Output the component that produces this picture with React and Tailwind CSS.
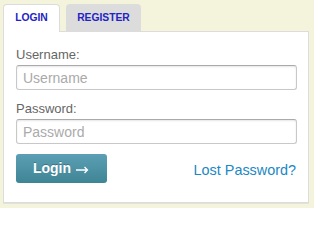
import React from 'react';

const font = { fontFamily: '"Liberation Sans", Arial, sans-serif' };

export default function App() {
    return (
        <div className="w-[314px] h-[208px] bg-[#f4f4dc] pt-[4px] pl-[3px] pr-[5px]" style={font}>
            {/* Onglets */}
            <div className="flex gap-[6px] items-end">
                <div className="relative z-10 -mb-px w-[57px] h-[28px] bg-white border border-b-0 border-[#dcdcdc] rounded-t-[4px] flex items-center justify-center pb-px">
                    <span className="text-[10.3px] font-bold text-[#2323c4]">LOGIN</span>
                </div>
                <div className="w-[75px] h-[27px] bg-[#dcdcdc] rounded-t-[4px] flex items-center justify-center">
                    <span className="text-[10.3px] font-bold text-[#2323c4]">REGISTER</span>
                </div>
            </div>

            {/* Formulaire */}
            <div className="h-[172px] bg-white border border-[#dcdcdc] shadow-[0_1px_0_#e2e2d8] px-[12px] pt-[14px]">
                <label className="block text-[13px] leading-[17px] text-[#666] mb-[2px]">Username:</label>
                <input
                    className="block w-[281px] h-[25px] px-[6px] text-[14px] text-[#555] placeholder:text-[#aaa] border border-[#c8c8c8] border-t-[#aaa] rounded-[3px] shadow-[inset_0_1px_2px_rgba(0,0,0,0.1)] outline-none"
                    placeholder="Username"
                    style={font}
                />

                <label className="block text-[13px] leading-[17px] text-[#666] mt-[10px] mb-[2px]">Password:</label>
                <input
                    type="password"
                    className="block w-[281px] h-[25px] px-[6px] text-[14px] text-[#555] placeholder:text-[#aaa] border border-[#c8c8c8] border-t-[#aaa] rounded-[3px] shadow-[inset_0_1px_2px_rgba(0,0,0,0.1)] outline-none"
                    placeholder="Password"
                    style={font}
                />

                <div className="flex items-center justify-between mt-[10px] w-[281px]">
                    <button
                        className="w-[91px] h-[29px] rounded-[3px] bg-gradient-to-b from-[#5c9fb5] to-[#3e8595] text-white text-[14px] font-bold flex items-center justify-center gap-[5px] pr-px [text-shadow:0_-1px_0_rgba(0,0,0,0.25)]"
                        style={font}
                    >
                        <span>Login</span>
                        <svg width="13" height="8" viewBox="0 0 13 8" className="mt-[2px]">
                            <path d="M0 4h11.5M8.5 1l3 3-3 3" stroke="white" strokeWidth="1.3" fill="none" />
                        </svg>
                    </button>
                    <a className="text-[14.4px] text-[#1b87c3] mt-[4px] mr-px">Lost Password?</a>
                </div>
            </div>
        </div>
    );
}
